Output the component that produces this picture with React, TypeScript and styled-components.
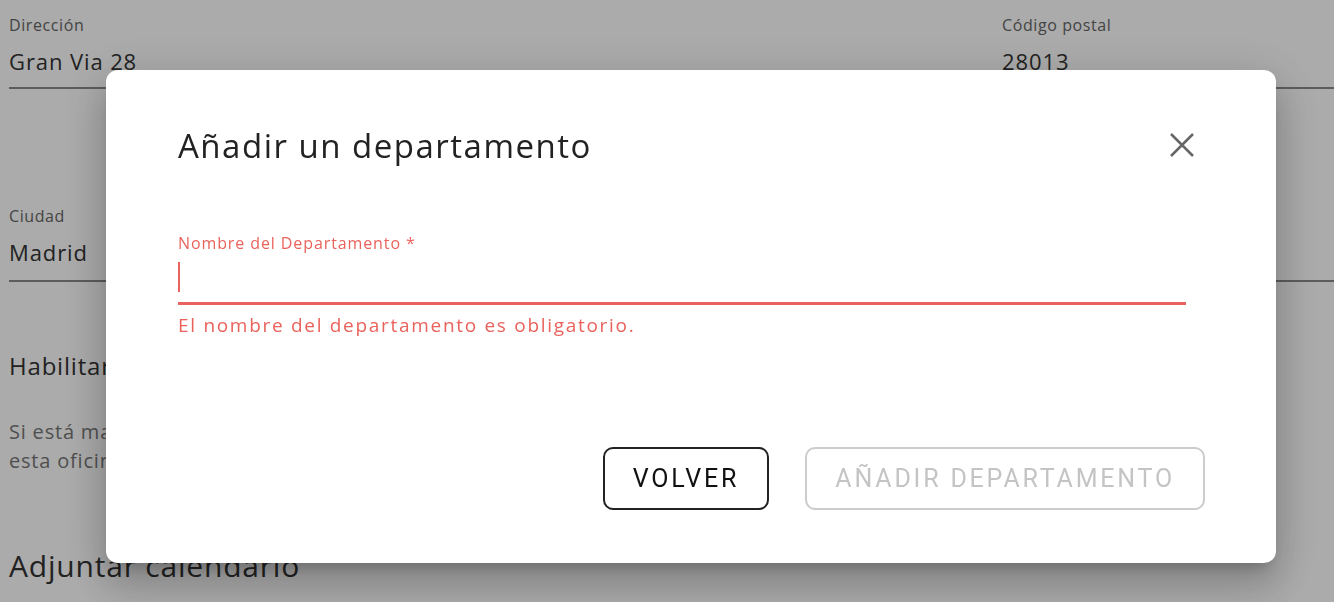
import styled, { createGlobalStyle } from "styled-components";

const GlobalStyle = createGlobalStyle`
  html, body {
    margin: 0;
    padding: 0;
    background: #fff;
    font-family: "Open Sans", "Noto Sans", sans-serif;
    overflow: hidden;
  }
`;

const Page = styled.div`
  padding: 14px 0 0 9px;
  height: 602px;
  box-sizing: border-box;
`;

const Row = styled.div`
  display: grid;
  grid-template-columns: 969px 340px;
  gap: 24px;
  margin-bottom: 116px;
`;

const Field = styled.div<{ $pad?: number }>`
  display: flex;
  flex-direction: column;
  border-bottom: 2px solid #8a8a8a;
  padding-bottom: ${(p) => p.$pad ?? 11}px;
`;

const FieldLabel = styled.span`
  font-size: 16px;
  letter-spacing: 0.6px;
  color: #666;
  line-height: 22px;
`;

const FieldValue = styled.span`
  font-size: 22px;
  letter-spacing: 0.9px;
  color: #333;
  margin-top: 10px;
  line-height: 30px;
`;

const Section = styled.section<{ $gap: number }>`
  margin-top: ${(p) => p.$gap}px;
`;

const SectionTitle = styled.h2<{ $size: number }>`
  margin: 0;
  font-weight: 400;
  font-size: ${(p) => p.$size}px;
  letter-spacing: 0.8px;
  line-height: 1.3;
  color: #333;
`;

const SectionText = styled.p`
  margin: 36px 0 0;
  font-size: 20px;
  letter-spacing: 0.8px;
  line-height: 29px;
  color: #777;
`;

const Overlay = styled.div`
  position: fixed;
  inset: 0;
  background: rgba(0, 0, 0, 0.33);
  padding: 70px 58px 0 106px;
`;

const Dialog = styled.div`
  width: 1170px;
  height: 493px;
  box-sizing: border-box;
  background: #fff;
  border-radius: 12px;
  padding: 40px 72px 0;
  display: flex;
  flex-direction: column;
  box-shadow: 0 11px 15px -7px rgba(0, 0, 0, 0.2),
    0 24px 38px 3px rgba(0, 0, 0, 0.14), 0 9px 46px 8px rgba(0, 0, 0, 0.12);
`;

const Header = styled.div`
  display: flex;
  align-items: center;
  justify-content: space-between;
  height: 70px;
`;

const Title = styled.h1`
  margin: 0;
  font-size: 33px;
  font-weight: 400;
  letter-spacing: 1.5px;
  color: #222;
`;

const CloseButton = styled.button`
  border: 0;
  background: none;
  padding: 0;
  margin-right: 6px;
  width: 32px;
  height: 32px;
  display: flex;
  align-items: center;
  justify-content: center;
  cursor: pointer;
`;

const InputGroup = styled.div`
  margin-top: 52px;
  width: 1008px;
  display: flex;
  flex-direction: column;
`;

const InputLabel = styled.label`
  font-size: 16px;
  letter-spacing: 0.9px;
  color: #ea625c;
  line-height: 22px;
`;

const InputLine = styled.div`
  height: 40px;
  border-bottom: 3px solid #ea625c;
  display: flex;
  align-items: flex-start;
  padding-top: 8px;
  box-sizing: content-box;
`;

const Caret = styled.span`
  width: 2px;
  height: 30px;
  background: #ea625c;
`;

const ErrorText = styled.span`
  margin-top: 8px;
  font-size: 19px;
  line-height: 24px;
  letter-spacing: 1.7px;
  color: #ea625c;
`;

const Actions = styled.div`
  margin-top: auto;
  margin-bottom: 53px;
  margin-right: -1px;
  display: flex;
  justify-content: flex-end;
  gap: 36px;
`;

const ActionButton = styled.button<{ $disabled?: boolean }>`
  height: 63px;
  padding: 0 28px;
  border-radius: 10px;
  background: #fff;
  border: 2px solid ${(p) => (p.$disabled ? "#cccccc" : "#222")};
  color: ${(p) => (p.$disabled ? "#c4c4c4" : "#111")};
  font-family: "Roboto", "Liberation Sans", sans-serif;
  font-size: 25px;
  letter-spacing: 2.8px;
  cursor: ${(p) => (p.$disabled ? "default" : "pointer")};
`;

export default function App() {
  return (
    <>
      <GlobalStyle />
      <Page>
        <Row>
          <Field>
            <FieldLabel>Dirección</FieldLabel>
            <FieldValue>Gran Via 28</FieldValue>
          </Field>
          <Field>
            <FieldLabel>Código postal</FieldLabel>
            <FieldValue>28013</FieldValue>
          </Field>
        </Row>
        <Row>
          <Field $pad={13}>
            <FieldLabel>Ciudad</FieldLabel>
            <FieldValue>Madrid</FieldValue>
          </Field>
          <Field $pad={13}>
            <FieldLabel>&nbsp;</FieldLabel>
            <FieldValue>&nbsp;</FieldValue>
          </Field>
        </Row>
        <Section $gap={-48}>
          <SectionTitle $size={24}>Habilitar departamentos</SectionTitle>
          <SectionText>
            Si está marcado, podrá añadir departamentos a
            <br />
            esta oficina.
          </SectionText>
        </Section>
        <Section $gap={71}>
          <SectionTitle $size={30}>Adjuntar calendario</SectionTitle>
        </Section>
      </Page>
      <Overlay>
        <Dialog>
          <Header>
            <Title>Añadir un departamento</Title>
            <CloseButton aria-label="Cerrar">
              <svg width="26" height="26" viewBox="0 0 26 26">
                <path
                  d="M2 2 L24 24 M24 2 L2 24"
                  stroke="#666"
                  strokeWidth="2.5"
                  fill="none"
                />
              </svg>
            </CloseButton>
          </Header>
          <InputGroup>
            <InputLabel>Nombre del Departamento *</InputLabel>
            <InputLine>
              <Caret />
            </InputLine>
            <ErrorText>El nombre del departamento es obligatorio.</ErrorText>
          </InputGroup>
          <Actions>
            <ActionButton>VOLVER</ActionButton>
            <ActionButton $disabled>AÑADIR DEPARTAMENTO</ActionButton>
          </Actions>
        </Dialog>
      </Overlay>
    </>
  );
}
